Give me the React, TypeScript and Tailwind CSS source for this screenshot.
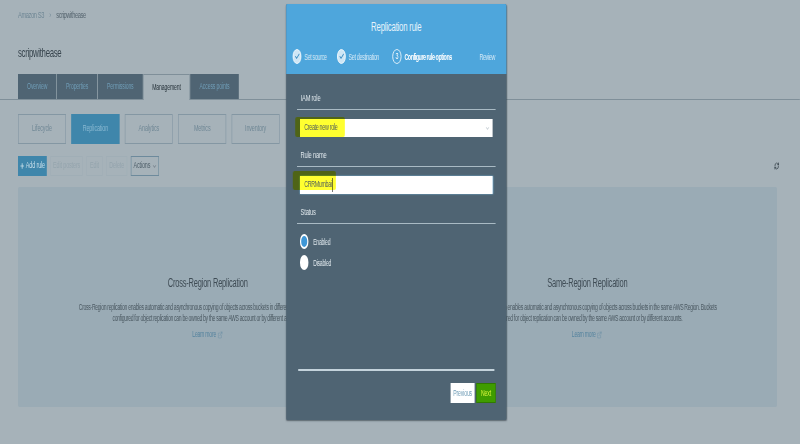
import { Check, ChevronDown, ExternalLink, Plus, RefreshCw } from "lucide-react";

const tabs = [
  { label: "Overview", w: "w-[64px]" },
  { label: "Properties", w: "w-[67px]" },
  { label: "Permissions", w: "w-[75px]" },
  { label: "Management", w: "w-[77px]", active: true },
  { label: "Access points", w: "w-[81px]" },
];

const subTabs = ["Lifecycle", "Replication", "Analytics", "Metrics", "Inventory"];

function Card({ title, lines }: { title: string; lines: string[] }) {
  return (
    <div className="flex flex-col items-center pt-[88px] text-center">
      <h2 className="text-[12.5px] leading-[16px] tracking-[-0.35px] text-[#3f4c55]">{title}</h2>
      <p className="mt-[11px] whitespace-nowrap text-[8.5px] leading-[11px] tracking-[-0.53px] text-[#4b5962]">
        {lines[0]}
        <br />
        {lines[1]}
      </p>
      <a className="mt-[5px] flex items-center gap-[2px] text-[8.5px] leading-[11px] tracking-[-0.4px] text-[#55839e]">
        Learn more <ExternalLink className="h-[8px] w-[10px]" strokeWidth={1.2} />
      </a>
    </div>
  );
}

function Step({ n, label, done, bold, className }: { n?: number; label: string; done?: boolean; bold?: boolean; className: string }) {
  return (
    <div className={`flex items-center gap-[5px] ${className}`}>
      {done ? (
        <span className="flex h-[15px] w-[14px] items-center justify-center rounded-full border border-white bg-[#cfe6f5] text-[#3f8fc4]">
          <Check className="h-[9px] w-[9px]" strokeWidth={3} />
        </span>
      ) : n ? (
        <span className="flex h-[15px] w-[15px] items-center justify-center rounded-full border border-white text-[9px] text-white">{n}</span>
      ) : null}
      <span className={`whitespace-nowrap text-[9px] leading-[12px] ${bold ? "font-bold tracking-[-0.8px] text-white" : "tracking-[-0.6px] text-[#d3e8f6]"}`}>{label}</span>
    </div>
  );
}

function SectionLabel({ children, className }: { children: string; className: string }) {
  return (
    <div className={`border-b border-[#a9bac4] pb-[5px] pl-[6px] text-[9.5px] leading-[13px] tracking-[-0.3px] text-[#dfe7ec] ${className}`}>{children}</div>
  );
}

export default function App() {
  return (
    <div className="relative h-[444px] w-[800px] overflow-hidden bg-[#a6b2b9]">
      <div className="relative h-[444px] w-[1333px] origin-top-left scale-x-[0.6] font-['Liberation_Sans',sans-serif]">
        <div className="flex h-[444px] flex-col pl-[30px] pr-[38px] pt-[9px] blur-[0.4px]">
          <div className="flex items-center gap-[9px] text-[9.5px] leading-[12px] tracking-[-0.65px] text-[#6f8795]">
            <span>Amazon S3</span>
            <span>›</span>
            <span className="text-[#56656f]">scripwithease</span>
          </div>
          <h1 className="mt-[24px] text-[13px] leading-[16px] tracking-[-0.5px] text-[#37444d]">scripwithease</h1>
          <div className="-ml-[30px] -mr-[38px] mt-[13px] flex h-[26px] border-b border-[#7f8f99] pl-[30px]">
            {tabs.map((t) => (
              <div
                key={t.label}
                className={`${t.w} mr-px flex items-center justify-center text-[8.5px] tracking-[-0.2px] ${
                  t.active ? "h-[26px] border-x border-t border-[#7f8f99] bg-[#a6b2b9] text-[#26323a]" : "h-[25px] bg-[#4f6473] text-[#6f9cb6]"
                }`}
              >
                {t.label}
              </div>
            ))}
          </div>
          <div className="mt-[14px] flex gap-[9px]">
            {subTabs.map((s) => (
              <div
                key={s}
                className={`flex h-[30px] w-[80px] items-center justify-center border text-[9px] tracking-[-0.2px] ${
                  s === "Replication" ? "border-[#3f86ab] bg-[#3f86ab] text-[#8ab9d2]" : "border-[#8497a3] text-[#6f8795]"
                }`}
              >
                {s}
              </div>
            ))}
          </div>
          <div className="relative mt-[12px] flex h-[20px] items-center gap-[6px] text-[9px] tracking-[-0.2px]">
            <div className="flex h-[20px] w-[48px] items-center justify-center gap-[2px] bg-[#3f86ab] text-[#c9dfea]">
              <Plus className="h-[8px] w-[8px]" strokeWidth={3} />
              Add rule
            </div>
            <div className="flex h-[20px] w-[54px] items-center justify-center border border-[#a0aeb6] text-[#94a4ad]">Edit posters</div>
            <div className="flex h-[20px] w-[27px] items-center justify-center border border-[#a0aeb6] text-[#94a4ad]">Edit</div>
            <div className="flex h-[20px] w-[35px] items-center justify-center border border-[#a0aeb6] text-[#94a4ad]">Delete</div>
            <div className="flex h-[20px] w-[47px] items-center justify-center gap-[3px] border border-[#6d8a9c] text-[#4d5d68]">
              Actions <ChevronDown className="h-[7px] w-[7px]" />
            </div>
            <RefreshCw className="ml-auto mr-[-5px] h-[8px] w-[11px] text-[#2f3b44]" strokeWidth={2.5} />
          </div>
          <div className="mt-[11px] grid h-[220px] grid-cols-2 rounded-[2px] bg-[#9aabb5]">
            <Card
              title="Cross-Region Replication"
              lines={[
                "Cross-Region replication enables automatic and asynchronous copying of objects across buckets in different AWS Regions. Buckets",
                "configured for object replication can be owned by the same AWS account or by different accounts.",
              ]}
            />
            <Card
              title="Same-Region Replication"
              lines={[
                "Same-Region replication enables automatic and asynchronous copying of objects across buckets in the same AWS Region. Buckets",
                "configured for object replication can be owned by the same AWS account or by different accounts.",
              ]}
            />
          </div>
        </div>

        <div className="absolute left-[477px] top-[4px] flex h-[416px] w-[367px] flex-col rounded-[2px] bg-[#4f6473] shadow-[0_1px_2px_rgba(40,50,60,0.6)] blur-[0.3px]">
          <div className="h-[70px] rounded-t-[2px] bg-[#4ea6dc] pt-[16px]">
            <div className="text-center text-[13px] leading-[14px] tracking-[-0.35px] text-[#e6f3fb]">Replication rule</div>
            <div className="mt-[15px] flex pl-[11px]">
              <Step done label="Set source" className="w-[74px]" />
              <Step done label="Set destination" className="w-[92px]" />
              <Step n={3} label="Configure rule options" bold className="w-[145px]" />
              <Step label="Review" className="" />
            </div>
          </div>
          <div className="flex flex-1 flex-col px-[18px] pt-[17px]">
            <SectionLabel className="">IAM role</SectionLabel>
            <div className="relative mx-[5px] mt-[9px] flex h-[18px] items-center justify-between bg-white pl-[7px] pr-[5px] text-[9px] tracking-[-0.55px] text-[#56625a]">
              <span className="absolute -left-[8px] -top-[2px] h-[20px] w-[83px] rounded-[3px] bg-[#ffff30] mix-blend-multiply" />
              <span className="relative">Create new role</span>
              <ChevronDown className="h-[7px] w-[7px] text-[#8fa0ab]" />
            </div>
            <SectionLabel className="mt-[11px]">Rule name</SectionLabel>
            <div className="relative mx-[5px] mt-[9px] flex h-[18px] items-center bg-white pl-[7px] text-[9px] tracking-[-0.65px] text-[#56625a] shadow-[0_0_2px_#7fc0ea]">
              <span className="absolute -left-[12px] -top-[5px] h-[19px] w-[72px] rounded-[3px] bg-[#ffff30] mix-blend-multiply" />
              <span className="relative border-r border-[#222] pr-px">CRRMumbai</span>
            </div>
            <SectionLabel className="mt-[11px]">Status</SectionLabel>
            <div className="mt-[10px] flex items-center gap-[8px] pl-[5px] text-[8.5px] leading-[14px] tracking-[-0.4px] text-[#dfe7ec]">
              <span className="h-[15px] w-[14px] rounded-full border-2 border-white bg-[#3f97d6]" />
              Enabled
            </div>
            <div className="mt-[6px] flex items-center gap-[8px] pl-[5px] text-[8.5px] leading-[14px] tracking-[-0.4px] text-[#dfe7ec]">
              <span className="h-[15px] w-[14px] rounded-full bg-white" />
              Disabled
            </div>
            <div className="mx-[2px] mt-auto border-t-2 border-[#c4d3dc]" />
            <div className="mb-[17px] mt-[12px] flex justify-end gap-[3px]">
              <div className="flex h-[20px] w-[40px] items-center justify-center bg-white text-[8.5px] tracking-[-0.2px] text-[#6f9cb6]">Previous</div>
              <div className="flex h-[20px] w-[32px] items-center justify-center border border-[#2f7a00] bg-[#3f9c00] text-[8.5px] tracking-[-0.2px] text-[#d8f53a]">Next</div>
            </div>
          </div>
        </div>
      </div>
    </div>
  );
}
